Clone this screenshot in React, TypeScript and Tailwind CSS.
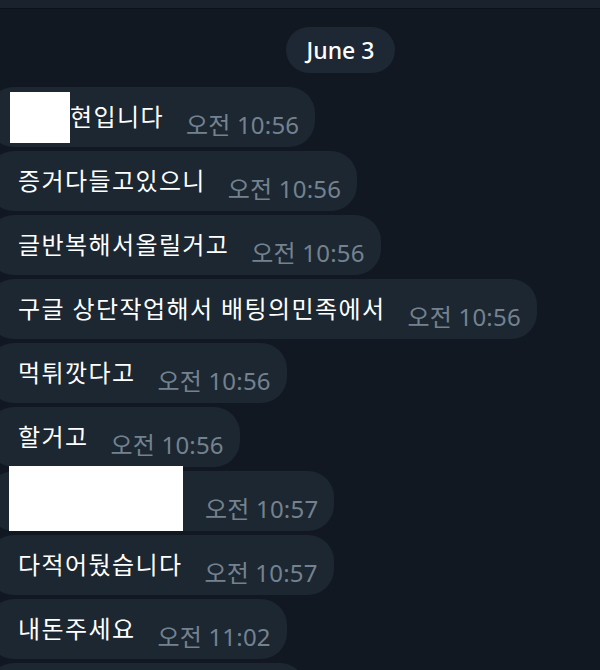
import type { ReactNode } from 'react'

type Msg = {
  text?: string
  time: string
  redact?: 'name' | 'block'
}

const MESSAGES: Msg[] = [
  { text: '현입니다', time: '오전 10:56', redact: 'name' },
  { text: '증거다들고있으니', time: '오전 10:56' },
  { text: '글반복해서올릴거고', time: '오전 10:56' },
  { text: '구글 상단작업해서 배팅의민족에서', time: '오전 10:56' },
  { text: '먹튀깟다고', time: '오전 10:56' },
  { text: '할거고', time: '오전 10:56' },
  { time: '오전 10:57', redact: 'block' },
  { text: '다적어뒀습니다', time: '오전 10:57' },
  { text: '내돈주세요', time: '오전 11:02' },
]

const FONT = "font-['Noto_Sans','Noto_Sans_CJK_KR',sans-serif]"

function Bubble({ children, time }: { children: ReactNode; time: string }) {
  return (
    <div className="flex h-[60px] w-fit -ml-[12px] items-center rounded-[26px] bg-[#1c2732] pl-[30px] pr-[16px]">
      {children}
      <span className="ml-[22px] self-end pb-[8px] text-[24px] leading-[28px] tracking-[0.2px] text-[#74828f] whitespace-nowrap">
        {time}
      </span>
    </div>
  )
}

export default function App() {
  return (
    <div className={`h-[670px] w-[600px] overflow-hidden bg-[#111821] ${FONT}`}>
      <div className="h-[9px] bg-[#1a232d] border-b border-[#0c1219]" />
      <div className="flex justify-center pt-[18px] pl-[81px]">
        <div className="flex h-[46px] items-center rounded-full bg-[#1d2834] px-[21px] text-[23px] font-medium text-white">
          June 3
        </div>
      </div>
      <div className="mt-[14px] flex flex-col gap-[4px]">
        {MESSAGES.map((m, i) => (
          <Bubble key={i} time={m.time}>
            {m.redact === 'name' && (
              <span className="-ml-[8px] h-[51px] w-[60px] bg-white" />
            )}
            {m.redact === 'block' ? (
              <span className="-ml-[9px] -mt-[5px] h-[65px] w-[174px] self-end bg-white" />
            ) : (
              <span className="text-[24px] leading-[30px] tracking-[1.4px] text-white whitespace-pre">{m.text}</span>
            )}
          </Bubble>
        ))}
        <div className="h-[60px] w-[318px] -ml-[12px] rounded-[26px] bg-[#1c2732]" />
      </div>
    </div>
  )
}
